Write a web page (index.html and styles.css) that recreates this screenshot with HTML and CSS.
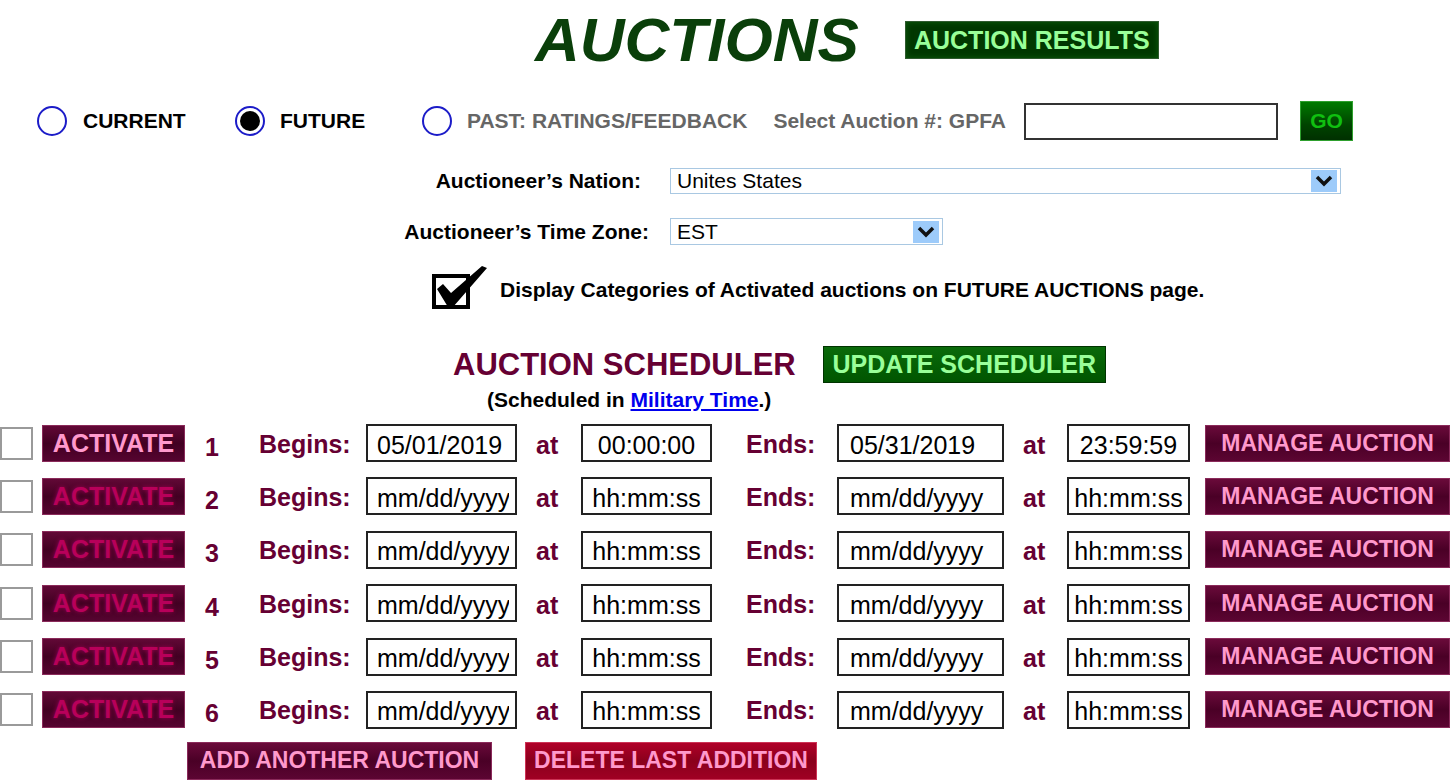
FILE: index.html
```html
<!DOCTYPE html>
<html>
<head>
    <title>Auctions</title>
    <link rel="stylesheet" href="styles.css">
</head>
<body>
    <div class="top">
        <h1 class="title">AUCTIONS</h1>
        <a class="btn btn-results" href="#">AUCTION RESULTS</a>
    </div>

    <div class="filter">
        <label class="opt opt-current"><span class="radio"></span>CURRENT</label>
        <label class="opt opt-future"><span class="radio checked"></span>FUTURE</label>
        <label class="opt opt-past"><span class="radio"></span>PAST: RATINGS/FEEDBACK</label>
        <span class="auction-no">Select Auction #: GPFA</span>
        <input class="auction-input" type="text">
        <a class="btn btn-go" href="#">GO</a>
    </div>

    <div class="field field-nation">
        <span class="field-label">Auctioneer’s Nation:</span>
        <div class="select select-nation">
            <span>Unites States</span>
            <span class="select-arrow">
                <svg width="18" height="12" viewBox="0 0 18 12"><path d="M2 2 L9 9 L16 2" fill="none" stroke="#111" stroke-width="3.5"/></svg>
            </span>
        </div>
    </div>

    <div class="field field-zone">
        <span class="field-label">Auctioneer’s Time Zone:</span>
        <div class="select select-zone">
            <span>EST</span>
            <span class="select-arrow">
                <svg width="18" height="12" viewBox="0 0 18 12"><path d="M2 2 L9 9 L16 2" fill="none" stroke="#111" stroke-width="3.5"/></svg>
            </span>
        </div>
    </div>

    <div class="display-opt">
        <svg class="check-icon" width="56" height="44" viewBox="0 0 56 44">
            <rect x="2" y="11" width="34" height="31" fill="none" stroke="#000" stroke-width="4"/>
            <polygon points="5,24 11,19 19,28 50,1 55,3 21,42 16,42" fill="#000"/>
        </svg>
        <span>Display Categories of Activated auctions on FUTURE AUCTIONS page.</span>
    </div>

    <div class="sched-head">
        <h2 class="sched-title">AUCTION SCHEDULER</h2>
        <a class="btn btn-update" href="#">UPDATE SCHEDULER</a>
    </div>
    <p class="sched-note">(Scheduled in <a href="#">Military Time</a>.)</p>

    <div class="sched">
        <span class="box"></span>
        <a class="btn btn-activate on" href="#">ACTIVATE</a>
        <span class="num">1</span>
        <span class="lbl">Begins:</span>
        <input class="inp inp-date" type="text" value="05/01/2019">
        <span class="at">at</span>
        <input class="inp inp-time" type="text" value="00:00:00">
        <span class="lbl lbl-ends">Ends:</span>
        <input class="inp inp-date2" type="text" value="05/31/2019">
        <span class="at">at</span>
        <input class="inp inp-time" type="text" value="23:59:59">
        <a class="btn btn-manage" href="#">MANAGE AUCTION</a>

        <span class="box"></span>
        <a class="btn btn-activate" href="#">ACTIVATE</a>
        <span class="num">2</span>
        <span class="lbl">Begins:</span>
        <input class="inp inp-date" type="text" placeholder="mm/dd/yyyy">
        <span class="at">at</span>
        <input class="inp inp-time" type="text" placeholder="hh:mm:ss">
        <span class="lbl lbl-ends">Ends:</span>
        <input class="inp inp-date2" type="text" placeholder="mm/dd/yyyy">
        <span class="at">at</span>
        <input class="inp inp-time" type="text" placeholder="hh:mm:ss">
        <a class="btn btn-manage" href="#">MANAGE AUCTION</a>

        <span class="box"></span>
        <a class="btn btn-activate" href="#">ACTIVATE</a>
        <span class="num">3</span>
        <span class="lbl">Begins:</span>
        <input class="inp inp-date" type="text" placeholder="mm/dd/yyyy">
        <span class="at">at</span>
        <input class="inp inp-time" type="text" placeholder="hh:mm:ss">
        <span class="lbl lbl-ends">Ends:</span>
        <input class="inp inp-date2" type="text" placeholder="mm/dd/yyyy">
        <span class="at">at</span>
        <input class="inp inp-time" type="text" placeholder="hh:mm:ss">
        <a class="btn btn-manage" href="#">MANAGE AUCTION</a>

        <span class="box"></span>
        <a class="btn btn-activate" href="#">ACTIVATE</a>
        <span class="num">4</span>
        <span class="lbl">Begins:</span>
        <input class="inp inp-date" type="text" placeholder="mm/dd/yyyy">
        <span class="at">at</span>
        <input class="inp inp-time" type="text" placeholder="hh:mm:ss">
        <span class="lbl lbl-ends">Ends:</span>
        <input class="inp inp-date2" type="text" placeholder="mm/dd/yyyy">
        <span class="at">at</span>
        <input class="inp inp-time" type="text" placeholder="hh:mm:ss">
        <a class="btn btn-manage" href="#">MANAGE AUCTION</a>

        <span class="box"></span>
        <a class="btn btn-activate" href="#">ACTIVATE</a>
        <span class="num">5</span>
        <span class="lbl">Begins:</span>
        <input class="inp inp-date" type="text" placeholder="mm/dd/yyyy">
        <span class="at">at</span>
        <input class="inp inp-time" type="text" placeholder="hh:mm:ss">
        <span class="lbl lbl-ends">Ends:</span>
        <input class="inp inp-date2" type="text" placeholder="mm/dd/yyyy">
        <span class="at">at</span>
        <input class="inp inp-time" type="text" placeholder="hh:mm:ss">
        <a class="btn btn-manage" href="#">MANAGE AUCTION</a>

        <span class="box"></span>
        <a class="btn btn-activate" href="#">ACTIVATE</a>
        <span class="num">6</span>
        <span class="lbl">Begins:</span>
        <input class="inp inp-date" type="text" placeholder="mm/dd/yyyy">
        <span class="at">at</span>
        <input class="inp inp-time" type="text" placeholder="hh:mm:ss">
        <span class="lbl lbl-ends">Ends:</span>
        <input class="inp inp-date2" type="text" placeholder="mm/dd/yyyy">
        <span class="at">at</span>
        <input class="inp inp-time" type="text" placeholder="hh:mm:ss">
        <a class="btn btn-manage" href="#">MANAGE AUCTION</a>
    </div>

    <div class="sched-actions">
        <a class="btn btn-add" href="#">ADD ANOTHER AUCTION</a>
        <a class="btn btn-delete" href="#">DELETE LAST ADDITION</a>
    </div>
</body>
</html>
```

FILE: styles.css
```css
body {
    margin: 0;
    background-color: #ffffff;
    color: #000000;
    font-family: "Liberation Sans", Arial, sans-serif;
    overflow: hidden;
}

.btn {
    display: flex;
    align-items: center;
    justify-content: center;
    box-sizing: border-box;
    text-decoration: none;
    font-weight: bold;
    white-space: nowrap;
}

/* header */
.top {
    display: flex;
    align-items: center;
    height: 80px;
    padding-left: 535px;
}

.title {
    margin: 0;
    font-size: 62px;
    font-style: italic;
    font-weight: bold;
    line-height: 1;
    color: #0a3f0a;
}

.btn-results {
    margin-left: 46px;
    width: 254px;
    height: 38px;
    font-size: 25px;
    color: #99ff99;
    background: #013801;
    border: 1px solid #2f5a2f;
    box-shadow: inset 0 0 6px #0d5a0d;
}

/* auction type filter */
.filter {
    display: flex;
    align-items: center;
    height: 42px;
    margin-top: 20px;
    padding-left: 37px;
    font-size: 21px;
    font-weight: bold;
}

.opt {
    display: flex;
    align-items: center;
    gap: 16px;
}

.opt-current {
    width: 198px;
}

.opt-future {
    width: 187px;
    gap: 15px;
}

.opt-past {
    margin-right: 26px;
    gap: 15px;
    color: #666666;
}

.radio {
    box-sizing: border-box;
    width: 30px;
    height: 30px;
    border: 2px solid #1c1cc8;
    border-radius: 50%;
    background: #ffffff;
    display: flex;
    align-items: center;
    justify-content: center;
}

.radio.checked::after {
    content: "";
    width: 20px;
    height: 20px;
    border-radius: 50%;
    background: #000000;
}

.auction-no {
    color: #666666;
    margin-right: 18px;
}

.auction-input {
    box-sizing: border-box;
    width: 254px;
    height: 37px;
    border: 2px solid #333333;
    margin: 0;
}

.btn-go {
    margin-left: 22px;
    width: 53px;
    height: 40px;
    font-size: 21px;
    color: #10c010;
    background: linear-gradient(#007a00, #004400 60%, #003000);
    border: 1px solid #2ea02e;
}

/* nation / time zone */
.field {
    display: flex;
    align-items: center;
}

.field-label {
    width: 649px;
    box-sizing: border-box;
    text-align: right;
    margin-right: 21px;
    font-size: 21px;
    font-weight: bold;
}

.field-nation {
    margin-top: 26px;
    height: 26px;
}

.field-nation .field-label {
    padding-right: 8px;
}

.field-zone {
    margin-top: 24px;
    height: 27px;
}

.select {
    display: flex;
    align-items: center;
    justify-content: space-between;
    box-sizing: border-box;
    height: 100%;
    padding: 0 3px 0 6px;
    border: 1px solid #a9c8e2;
    font-size: 21px;
}

.select-nation {
    width: 671px;
}

.select-zone {
    width: 273px;
}

.select-arrow {
    display: flex;
    align-items: center;
    justify-content: center;
    width: 26px;
    height: 22px;
    background: #9dcbfa;
}

/* display categories */
.display-opt {
    display: flex;
    align-items: center;
    gap: 12px;
    height: 44px;
    margin-top: 20px;
    padding-left: 432px;
    font-size: 21px;
    font-weight: bold;
}

.check-icon {
    flex-shrink: 0;
}

.display-opt span {
    margin-top: 6px;
}

/* scheduler */
.sched-head {
    display: flex;
    align-items: center;
    height: 37px;
    margin-top: 37px;
    padding-left: 453px;
}

.sched-title {
    margin: 0;
    font-size: 31px;
    font-weight: bold;
    color: #660033;
}

.btn-update {
    margin-left: 27px;
    width: 283px;
    height: 37px;
    font-size: 25px;
    color: #99ff99;
    background: linear-gradient(#0a6a0a, #005500);
    border: 1px solid #003300;
}

.sched-note {
    margin: 6px 0 0;
    padding-left: 487px;
    font-size: 21px;
    font-weight: bold;
    line-height: 22px;
}

.sched-note a {
    color: #0000ee;
}

.sched {
    display: grid;
    grid-template-columns: 42px 143px 74px 107px 151px 64px 131px 125px 167px 63px 123px 260px;
    grid-auto-rows: 38px;
    row-gap: 15.4px;
    align-items: center;
    margin-top: 13px;
    color: #660033;
    font-size: 25px;
    font-weight: bold;
}

.box {
    box-sizing: border-box;
    width: 33px;
    height: 33px;
    border: 2px solid #9a9a9a;
    background: #ffffff;
}

.btn-activate {
    height: 37px;
    font-size: 25px;
    color: #b8005a;
    background: linear-gradient(#620836, #420022 50%, #560430);
    border: 1px solid #8a2a5a;
    text-shadow: 0 0 4px #99004d;
}

.btn-activate.on {
    color: #ff99cc;
    text-shadow: none;
}

.num {
    padding-left: 20px;
    padding-top: 8px;
}

.lbl {
    padding-top: 2px;
}

.at {
    padding-left: 19px;
    padding-top: 4px;
}

.lbl-ends {
    padding-left: 34px;
}

.inp {
    box-sizing: border-box;
    height: 38px;
    margin: 0;
    padding: 4px 6px 0 9px;
    border: 2px solid #222222;
    font-family: "Liberation Sans", Arial, sans-serif;
    font-size: 25px;
    color: #000000;
    width: 100%;
}

.inp::placeholder {
    color: #000000;
    opacity: 1;
}

.inp-date2 {
    padding-left: 11px;
}

.inp-time {
    padding-left: 2px;
    padding-right: 2px;
    text-align: center;
}

.btn-manage {
    margin-left: 15px;
    width: 245px;
    height: 37px;
    font-size: 23px;
    color: #ff99cc;
    background: linear-gradient(#6a0a3a, #4a0026 50%, #5c0532);
    border: 1px solid #8a2a5a;
}

.sched-actions {
    display: flex;
    margin-top: 13px;
    padding-left: 187px;
    gap: 33px;
}

.btn-add {
    width: 305px;
    height: 38px;
    font-size: 23px;
    color: #ff99cc;
    background: linear-gradient(#6a0a3a, #4a0026 50%, #5c0532);
    border: 1px solid #8a2a5a;
}

.btn-delete {
    width: 292px;
    height: 38px;
    font-size: 23px;
    color: #ff99cc;
    background: linear-gradient(#b00028, #8a001c 50%, #a00024);
    border: 1px solid #cc3355;
}
```
